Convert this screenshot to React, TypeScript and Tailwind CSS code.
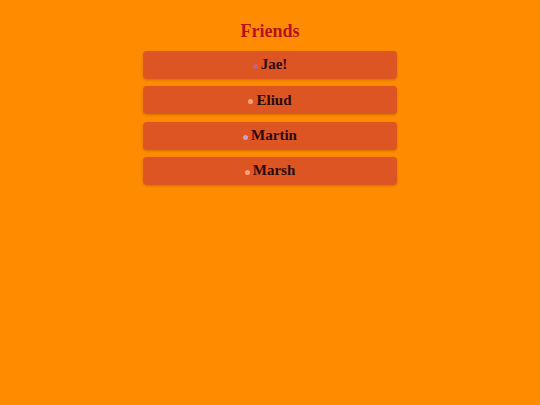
export default function App() {
  const friends = [
    { name: "Jae!", color: "#c8607a" },
    { name: "Eliud", color: "#ffa07a" },
    { name: "Martin", color: "#c8a0d0" },
    { name: "Marsh", color: "#ffa07a" },
  ];
  return (
    <div className="min-h-screen w-full bg-[#ff8c00] pt-[20px] font-['Liberation_Serif',serif]">
      <h1 className="text-center text-[18px] font-bold leading-[22px] text-[#b5121b]">Friends</h1>
      <ul className="mx-auto mt-[9px] flex w-[254px] flex-col gap-[7.3px]">
        {friends.map((f) => (
          <li
            key={f.name}
            className="flex h-[28px] items-center justify-center gap-[3px] rounded-[4px] bg-[#dd5522] shadow-[0_1px_3px_rgba(0,0,0,0.2)]"
          >
            <span className="mt-[3px] h-[5px] w-[5px] rounded-full" style={{ backgroundColor: f.color }} />
            <span className="-mt-[1px] text-[15px] font-bold text-[#2a0a0a]">{f.name}</span>
          </li>
        ))}
      </ul>
    </div>
  );
}
